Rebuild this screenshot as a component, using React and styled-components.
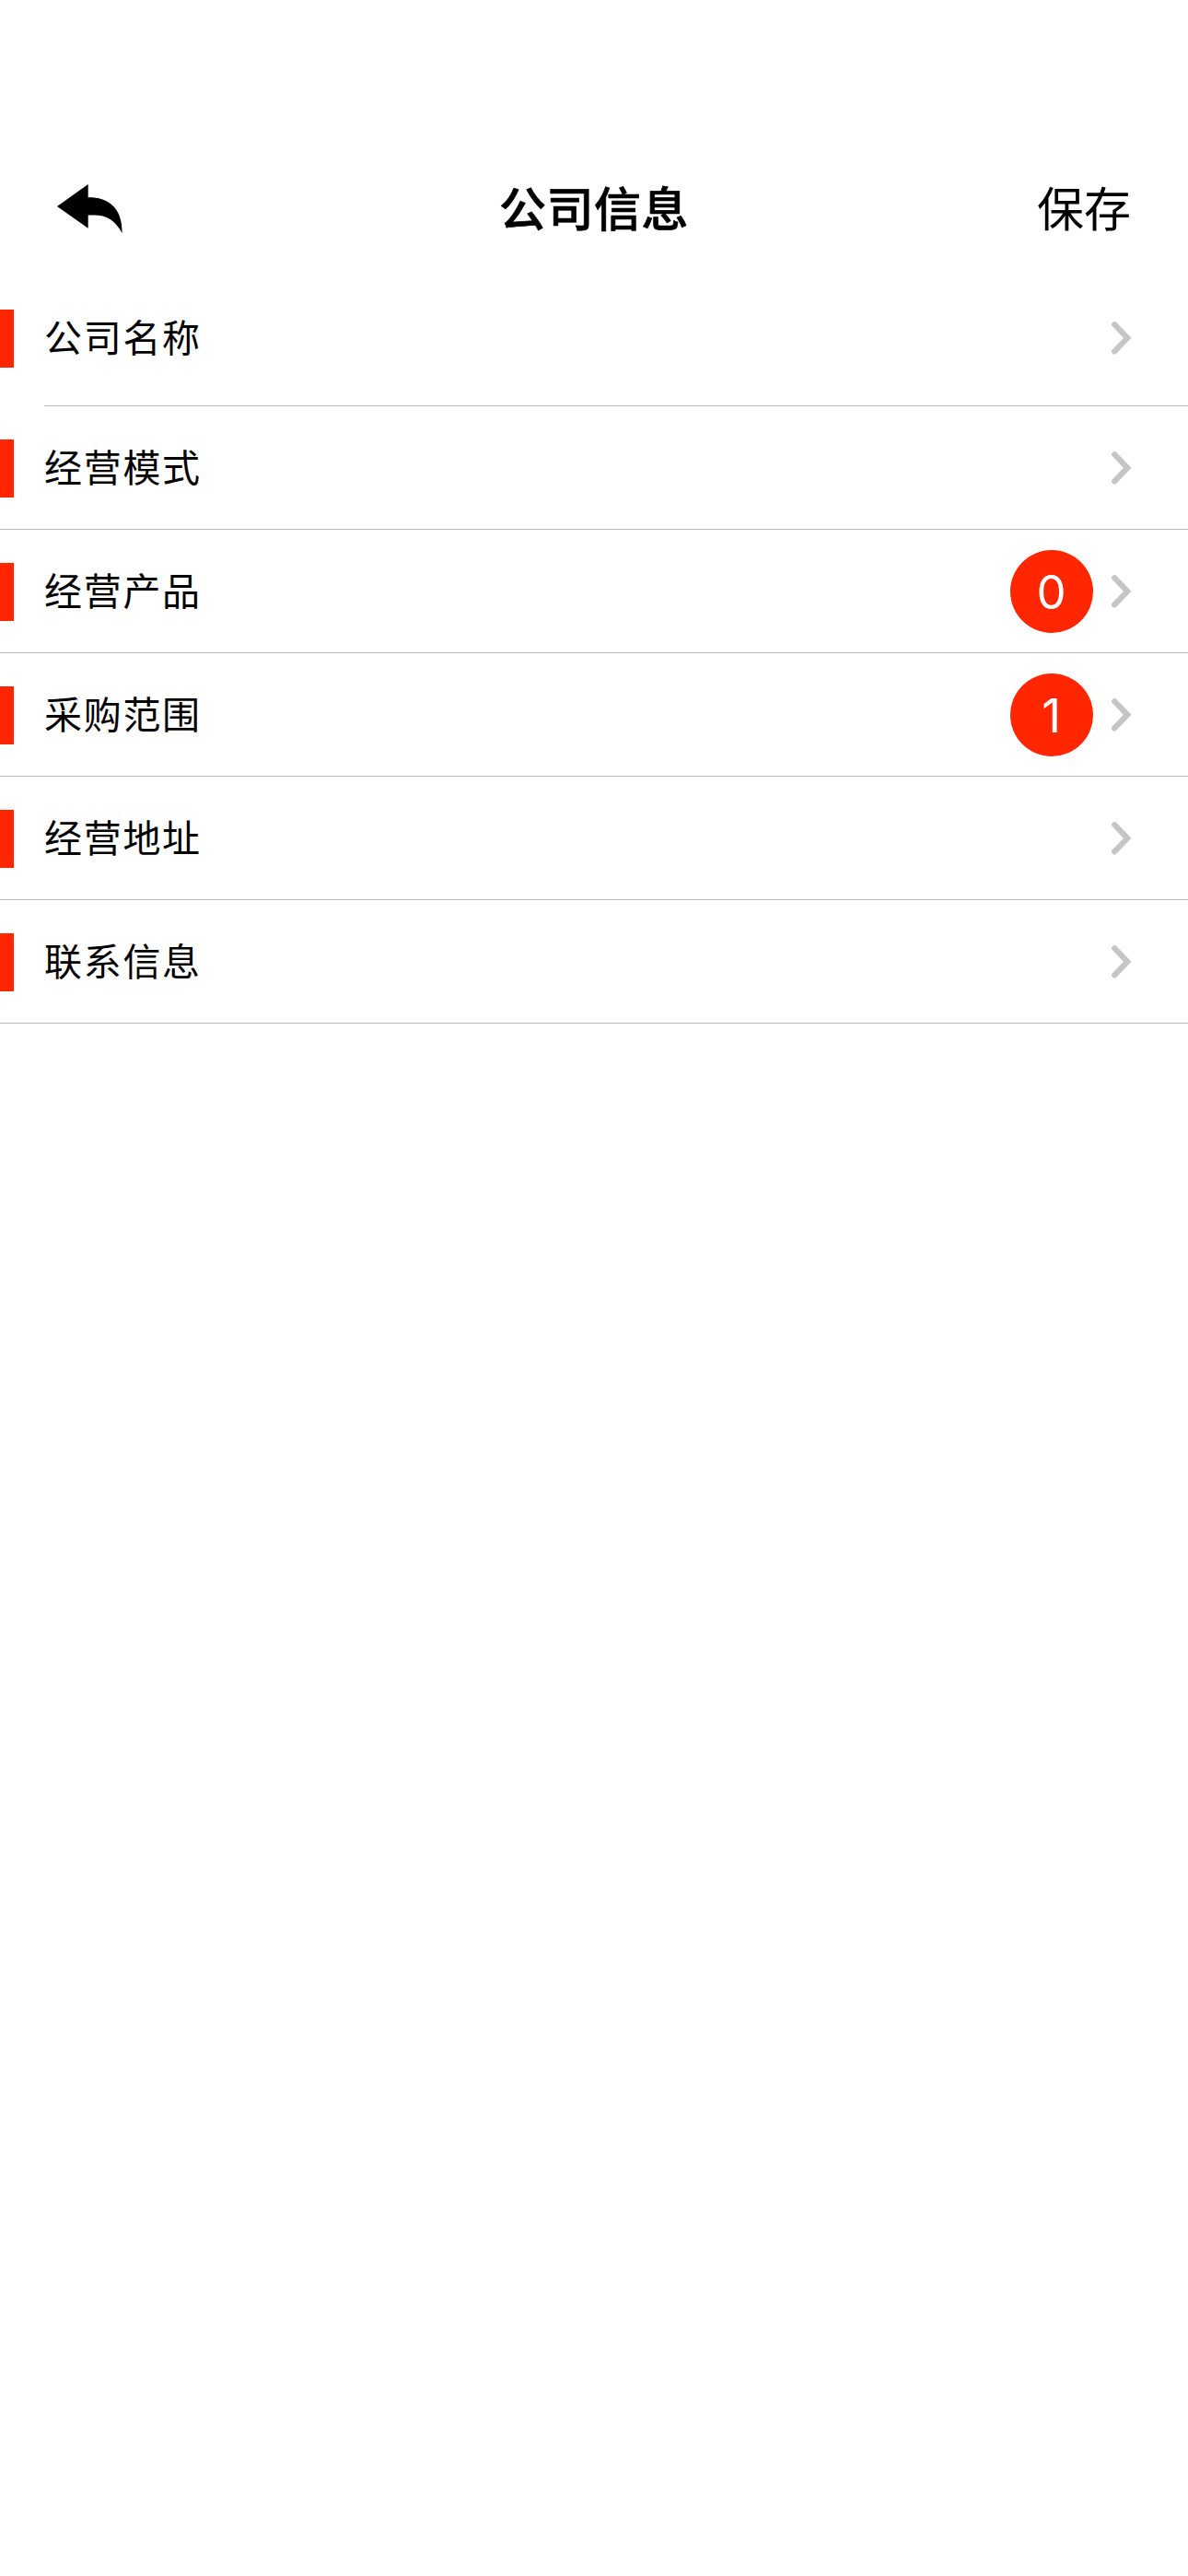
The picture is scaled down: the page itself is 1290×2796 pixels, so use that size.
import React from "react";
import styled, { createGlobalStyle } from "styled-components";

const GlobalStyle = createGlobalStyle`
  * { box-sizing: border-box; }
  body {
    margin: 0;
    background: #fff;
    color: #000;
    font-family: "Noto Sans CJK SC", sans-serif;
  }
`;

const Screen = styled.main`
  display: flex;
  flex-direction: column;
  min-height: 2796px;
  padding-top: 162px;
  background: #fff;
`;

const Header = styled.header`
  display: grid;
  grid-template-columns: 1fr auto 1fr;
  align-items: center;
  height: 132px;
  padding: 0 62px 3px;
`;

const BackButton = styled.button`
  display: flex;
  justify-self: start;
  padding: 0;
  border: 0;
  background: none;
`;

const BackIcon = styled.svg`
  display: block;
  width: 72px;
  height: 54px;
`;

const Title = styled.h1`
  margin: 0;
  padding-bottom: 6px;
  font-size: 51px;
  font-weight: 500;
  line-height: 72px;
  letter-spacing: 0.5px;
  -webkit-text-stroke: 0.7px #000;
`;

const SaveButton = styled.button`
  justify-self: end;
  padding: 0 0 6px;
  border: 0;
  background: none;
  color: #000;
  font: inherit;
  font-size: 51px;
  line-height: 72px;
`;

const List = styled.ul`
  display: flex;
  flex-direction: column;
  margin: 0;
  padding: 0;
  list-style: none;
`;

const Row = styled.li`
  display: flex;
  align-items: center;
  height: ${(p) => (p.$first ? "147px" : "134px")};
  padding-right: 60px;
  padding-top: ${(p) => (p.$first ? "0" : "1px")};
  background: linear-gradient(#bcbcbe, #bcbcbe) right bottom /
    ${(p) => (p.$first ? "calc(100% - 48px)" : "100%")} 1px no-repeat;
`;

const Marker = styled.span`
  width: 15px;
  height: 63px;
  background: #ff2600;
`;

const Label = styled.span`
  flex: 1;
  padding: 0 0 7px 33px;
  font-size: 41px;
  line-height: 60px;
  letter-spacing: 1.7px;
`;

const Badge = styled.span`
  display: flex;
  align-items: center;
  justify-content: center;
  width: 90px;
  height: 90px;
  margin-right: 19px;
  margin-bottom: 1px;
  padding: 2px 1px 0 0;
  border-radius: 50%;
  background: #ff2600;
  color: #fff;
  font-family: Inter, sans-serif;
  font-size: 51px;
  line-height: 60px;
`;

const Chevron = styled.svg`
  display: block;
  width: 24px;
  height: 38px;
  margin-bottom: 1px;
`;

const rows = [
  { label: "公司名称" },
  { label: "经营模式" },
  { label: "经营产品", count: 0 },
  { label: "采购范围", count: 1 },
  { label: "经营地址" },
  { label: "联系信息" },
];

export default function App() {
  return (
    <>
      <GlobalStyle />
      <Screen>
        <Header>
          <BackButton aria-label="返回">
            <BackIcon viewBox="0 0 72 54">
              <path d="M0 24 33.7 0V14.3C54 14 71 24 70.6 53C63 39 54 33.4 40 33.4H33.7V47.7Z" />
            </BackIcon>
          </BackButton>
          <Title>公司信息</Title>
          <SaveButton>保存</SaveButton>
        </Header>
        <List>
          {rows.map(({ label, count }, index) => (
            <Row key={label} $first={index === 0}>
              <Marker />
              <Label>{label}</Label>
              {count !== undefined && <Badge>{count}</Badge>}
              <Chevron viewBox="0 0 24 38">
                <path
                  d="M4.2 4.2 18.2 18.8 4.2 33.4"
                  fill="none"
                  stroke="#c5c5c7"
                  strokeWidth="6.2"
                  strokeLinecap="round"
                />
              </Chevron>
            </Row>
          ))}
        </List>
      </Screen>
    </>
  );
}
